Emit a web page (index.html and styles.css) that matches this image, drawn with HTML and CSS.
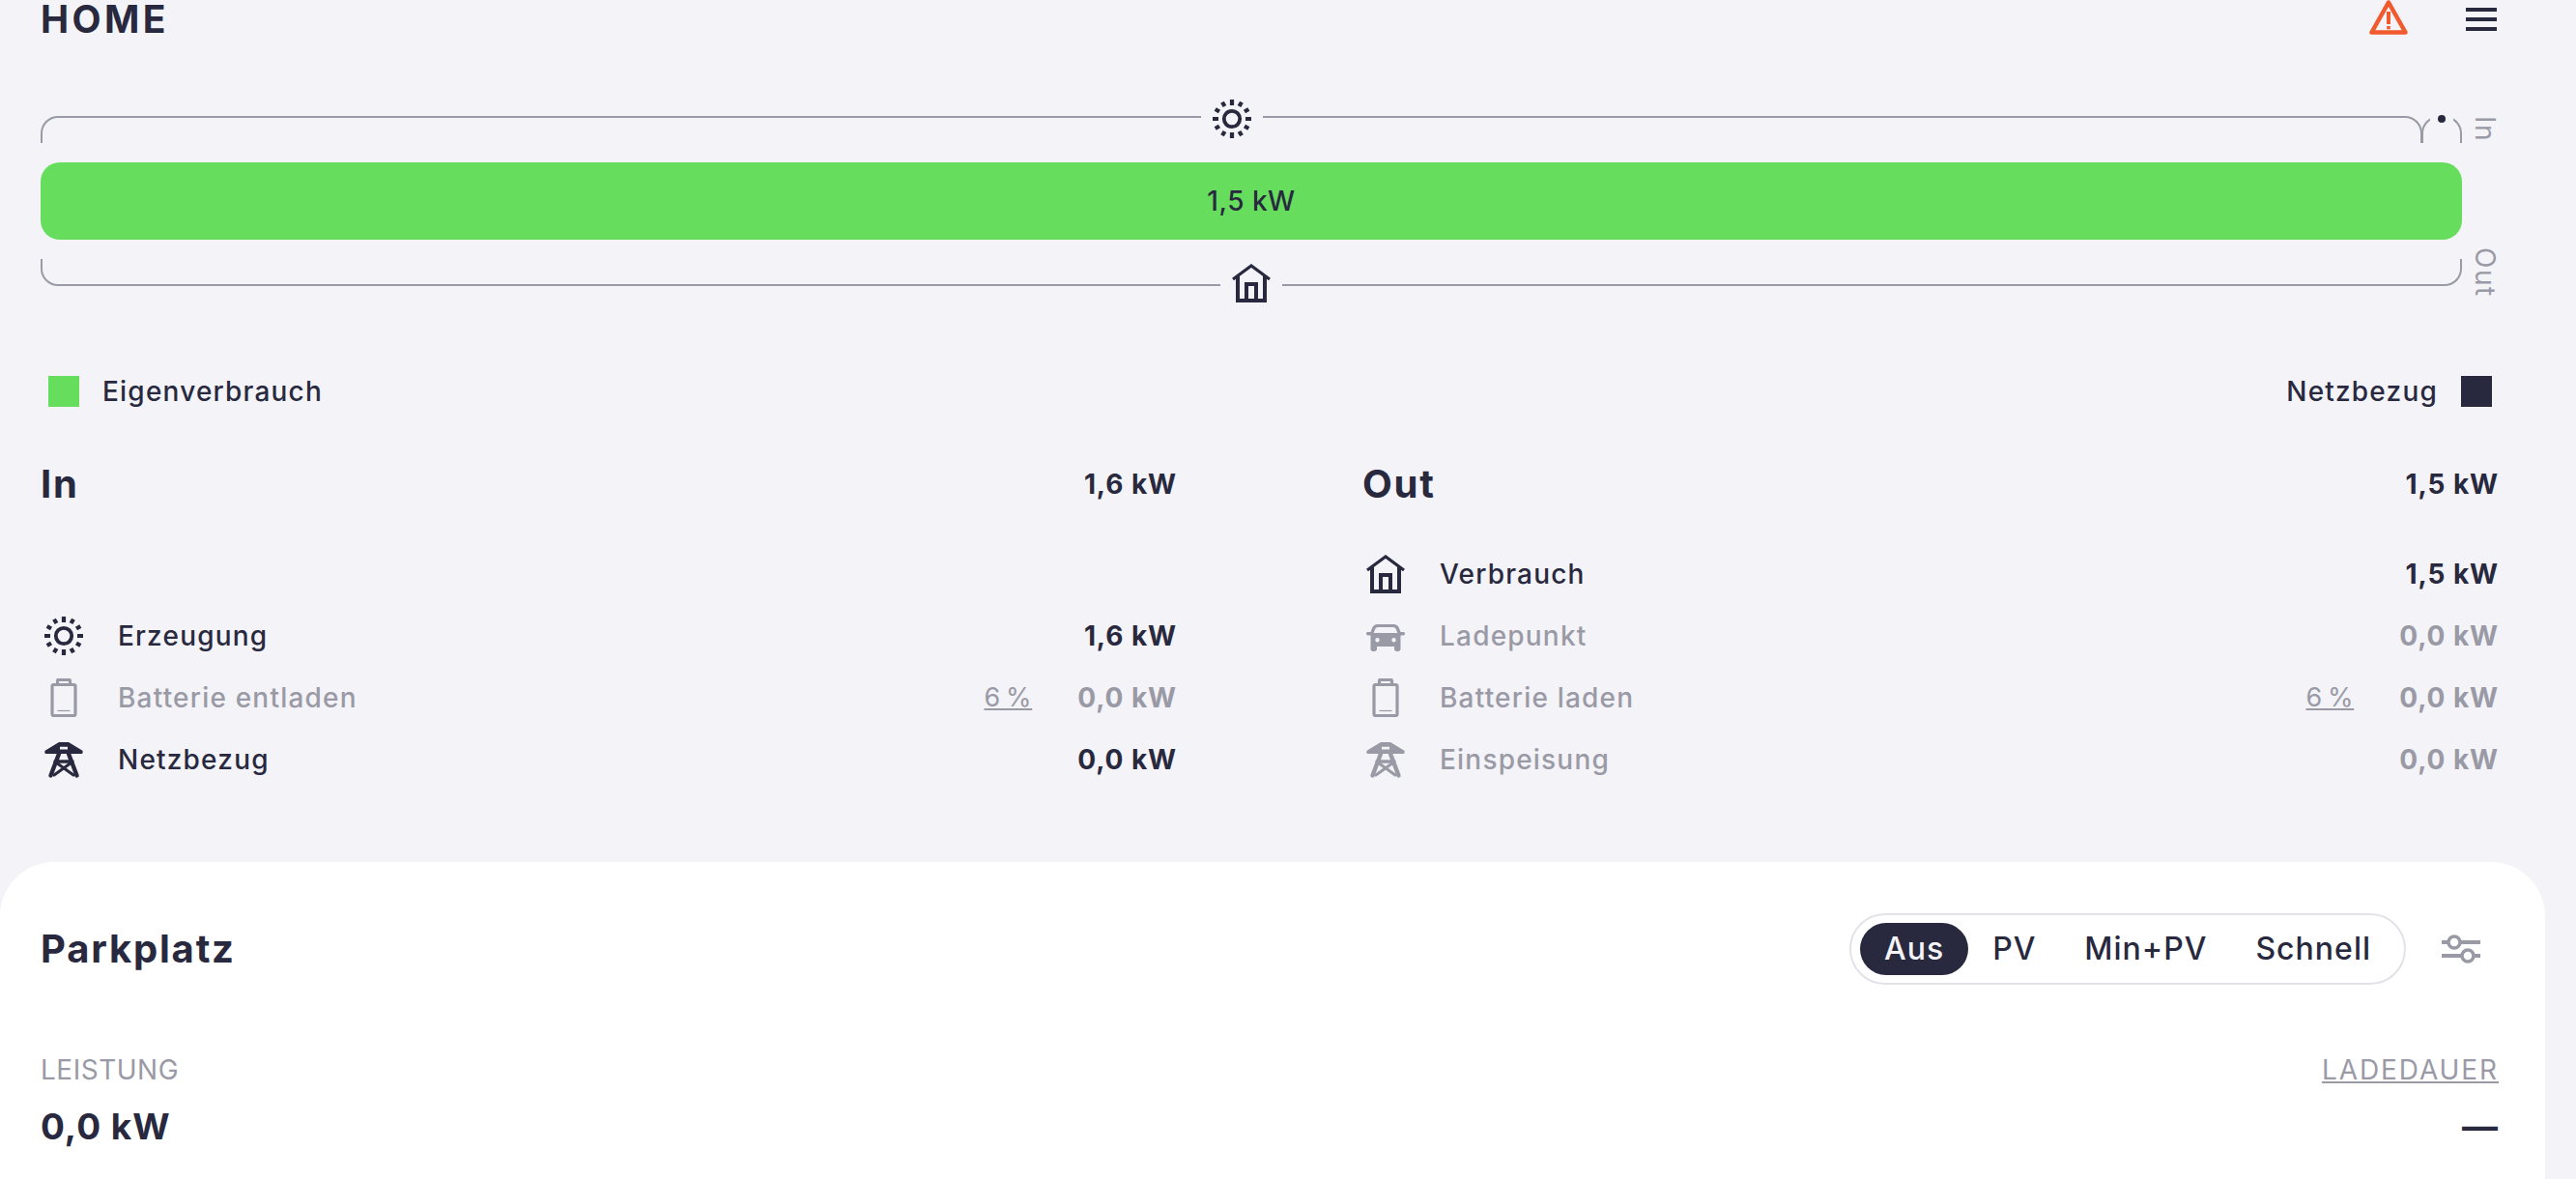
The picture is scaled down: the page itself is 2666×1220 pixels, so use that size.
FILE: index.html
```html
<!DOCTYPE html>
<html lang="de">
<head>
  <meta charset="UTF-8" />
  <title>HOME</title>
  <link rel="stylesheet" href="styles.css">
</head>
<body>
  <svg class="sprite" width="0" height="0">
    <symbol id="i-sun" viewBox="0 0 40 40">
      <circle cx="20" cy="20" r="8.200" fill="none" stroke="currentColor" stroke-width="3.800" />
      <g stroke="currentColor" stroke-width="4.200" fill="none">
        <path d="M20 0v6M20 34v6M0 20h6M34 20h6" />
        <path d="M10 2.700l2.500 4.300M27.500 33l2.500 4.300M2.700 10l4.300 2.500M33 27.500l4.300 2.500M30 2.700L27.500 7M12.500 33L10 37.300M37.300 10L33 12.500M7 27.500L2.700 30" />
      </g>
    </symbol>
    <symbol id="i-home" viewBox="0 0 40 40">
      <g fill="none" stroke="currentColor">
        <path d="M1 16L20 2l19 14" stroke-width="3.200" />
        <path d="M6 13v25h28V13" stroke-width="4" />
        <path d="M15 38V21h10v17" stroke-width="4" />
      </g>
    </symbol>
    <symbol id="i-battery" viewBox="0 0 40 40">
      <g fill="none" stroke="currentColor" stroke-linejoin="round">
        <rect x="8" y="6.500" width="24" height="32" rx="1.500" stroke-width="3.200" />
        <path d="M13.500 6V2.500a1 1 0 0 1 1-1h11a1 1 0 0 1 1 1V6" stroke-width="3.200" />
        <path d="M13.500 33.500h13" stroke-width="1.200" />
      </g>
    </symbol>
    <symbol id="i-tower" viewBox="0 0 40 40">
      <path fill="currentColor" fill-rule="evenodd" d="M15 2h10l14 8.500c1 .6 1 3.500-.5 3.500h-37C0 14 0 11.100 1 10.500zM16 6.700v2.800h8V6.700z" />
      <g fill="none" stroke="currentColor" stroke-linecap="round">
        <path d="M15 14L6.500 36.500M25 14l8.500 22.500" stroke-width="4.400" />
        <path d="M11 22h18" stroke-width="3.400" />
        <path d="M12 23l18 13M28 23L10 36" stroke-width="3" />
      </g>
    </symbol>
    <symbol id="i-car" viewBox="0 0 40 40">
      <path fill="currentColor" fill-rule="evenodd" d="M12 8h16c3 0 5 1.500 6 4l1.500 4H38.500c1 0 1.500.6 1.500 1.500s-.5 2-1.500 2H35.500V33.500c0 1.500-1 2.500-2.500 2.500h-1.500c-1.500 0-2.500-1-2.500-2.500V31H11v2.500c0 1.500-1 2.500-2.500 2.500H7c-1.500 0-2.500-1-2.500-2.500V19.500H1.500c-1 0-1.500-1.100-1.500-2S.5 16 1.500 16h3L6 12c1-2.500 3-4 6-4zm.5 3c-1.800 0-2.800.7-3.400 2.200L7.800 17h24.400l-1.300-3.800C30.300 11.700 29.300 11 27.500 11zM11.500 22a2.200 2.200 0 1 0 0 4.400 2.200 2.200 0 0 0 0-4.400zm17 0a2.200 2.200 0 1 0 0 4.400 2.200 2.200 0 0 0 0-4.400z" />
    </symbol>
  </svg>

  <div class="page">
    <header class="top">
      <h1>HOME</h1>
      <div class="top-icons">
        <svg class="warn" viewBox="0 0 40 36">
          <path d="M20 2.500L2.500 33.500h35z" fill="none" stroke="currentColor" stroke-width="4.500" stroke-linejoin="round" />
          <path d="M18 12h4v13h-4zM18.200 27h3.600v3.200h-3.600z" fill="currentColor" />
        </svg>
        <div class="burger"><span></span><span></span><span></span></div>
      </div>
    </header>

    <section class="flow">
      <div class="brackets brackets-in">
        <div class="seg"><span class="seg-icon"><svg class="icon"><use href="#i-sun" /></svg></span></div>
        <div class="seg seg-small"><span class="seg-icon"><i class="dot"></i></span></div>
      </div>
      <div class="side-label">In</div>

      <div class="bar">1,5 kW</div>
      <div></div>

      <div class="brackets brackets-out">
        <div class="seg"><span class="seg-icon"><svg class="icon"><use href="#i-home" /></svg></span></div>
      </div>
      <div class="side-label side-label-out">Out</div>
    </section>

    <div class="legend">
      <div class="legend-item"><i class="swatch swatch-green"></i>Eigenverbrauch</div>
      <div class="legend-item">Netzbezug<i class="swatch swatch-dark"></i></div>
    </div>

    <section class="totals">
      <div class="col">
        <div class="col-head"><h2>In</h2><b>1,6 kW</b></div>
        <div class="row row-empty"></div>
        <div class="row">
          <svg class="icon"><use href="#i-sun" /></svg>
          <span class="row-name">Erzeugung</span>
          <b>1,6 kW</b>
        </div>
        <div class="row is-off">
          <svg class="icon"><use href="#i-battery" /></svg>
          <span class="row-name">Batterie entladen</span>
          <u class="pct">6 %</u>
          <b>0,0 kW</b>
        </div>
        <div class="row">
          <svg class="icon"><use href="#i-tower" /></svg>
          <span class="row-name">Netzbezug</span>
          <b>0,0 kW</b>
        </div>
      </div>

      <div class="col">
        <div class="col-head"><h2>Out</h2><b>1,5 kW</b></div>
        <div class="row">
          <svg class="icon"><use href="#i-home" /></svg>
          <span class="row-name">Verbrauch</span>
          <b>1,5 kW</b>
        </div>
        <div class="row is-off">
          <svg class="icon"><use href="#i-car" /></svg>
          <span class="row-name">Ladepunkt</span>
          <b>0,0 kW</b>
        </div>
        <div class="row is-off">
          <svg class="icon"><use href="#i-battery" /></svg>
          <span class="row-name">Batterie laden</span>
          <u class="pct">6 %</u>
          <b>0,0 kW</b>
        </div>
        <div class="row is-off">
          <svg class="icon"><use href="#i-tower" /></svg>
          <span class="row-name">Einspeisung</span>
          <b>0,0 kW</b>
        </div>
      </div>
    </section>

    <section class="card">
      <div class="card-head">
        <h2>Parkplatz</h2>
        <div class="card-controls">
          <div class="modes">
            <button class="mode is-active">Aus</button>
            <button class="mode">PV</button>
            <button class="mode">Min+PV</button>
            <button class="mode">Schnell</button>
          </div>
          <svg class="sliders" viewBox="0 0 40 32">
            <g fill="none" stroke="currentColor" stroke-width="4">
              <path d="M0 9h7M19 9h21M0 23h21M33 23h7" />
              <circle cx="13" cy="9" r="6" stroke-width="3.500" />
              <circle cx="27" cy="23" r="6" stroke-width="3.500" />
            </g>
          </svg>
        </div>
      </div>
      <div class="card-stats">
        <div>
          <div class="stat-label">LEISTUNG</div>
          <div class="stat-value">0,0 kW</div>
        </div>
        <div class="stat-right">
          <u class="stat-label stat-label-link">LADEDAUER</u>
          <div class="stat-value">—</div>
        </div>
      </div>
    </section>
  </div>
</body>
</html>
```

FILE: styles.css
```css
body {
  margin: 0;
  background: #f3f3f8;
  color: #28293e;
  font-family: Inter, "Noto Sans", sans-serif;
  font-size: 28px;
  font-weight: 500;
  letter-spacing: 1.2px;
  height: 1220px;
  overflow: hidden;
}
.sprite {
  position: absolute;
}
.page {
  padding-left: 42px;
}
h1, h2 {
  margin: 0;
  font-weight: 700;
}
.icon {
  display: block;
  width: 40px;
  height: 40px;
  flex: none;
}

/* header */
.top {
  display: flex;
  justify-content: space-between;
  align-items: flex-start;
  height: 40px;
  padding-right: 82px;
}
.top h1 {
  font-size: 39px;
  line-height: 40px;
  letter-spacing: 3.4px;
}
.top-icons {
  display: flex;
  align-items: flex-start;
  gap: 60px;
}
.warn {
  width: 40px;
  height: 36px;
  color: #f15a2c;
}
.burger {
  display: flex;
  flex-direction: column;
  gap: 6px;
  width: 32px;
  padding-top: 8px;
}
.burger span {
  height: 4px;
  background: #28293e;
}

/* power flow */
.flow {
  display: grid;
  grid-template-columns: 2506px 1fr;
  column-gap: 9px;
  row-gap: 20px;
  margin-top: 80px;
}
.brackets {
  display: flex;
  height: 28px;
}
.seg {
  flex: 1;
  box-sizing: border-box;
  display: flex;
  justify-content: center;
  border: 2px solid #9a9aa6;
  border-bottom: none;
  border-radius: 18px 18px 0 0;
}
.seg-small {
  flex: none;
  width: 42px;
  margin-left: -1px;
}
.seg-icon {
  height: 40px;
  padding: 0 12px;
  margin-top: -19px;
  background: #f3f3f8;
}
.seg-small .seg-icon {
  height: 8px;
  padding: 0 8px;
  margin-top: -3px;
}
.dot {
  display: block;
  width: 8px;
  height: 8px;
  border-radius: 50%;
  background: #28293e;
}
.brackets-out .seg {
  border: 2px solid #9a9aa6;
  border-top: none;
  border-radius: 0 0 18px 18px;
  align-items: flex-end;
}
.brackets-out .seg-icon {
  margin: 0 0 -19px;
}
.side-label {
  justify-self: start;
  writing-mode: vertical-rl;
  font-size: 28px;
  font-weight: 400;
  line-height: 30px;
  letter-spacing: 1.5px;
  color: #9a9aa6;
}
.side-label-out {
  margin-top: -12px;
}
.bar {
  height: 80px;
  line-height: 80px;
  border-radius: 20px;
  background: #66dd5c;
  text-align: center;
  letter-spacing: 0.5px;
}

/* legend */
.legend {
  display: flex;
  justify-content: space-between;
  margin-top: 80px;
  padding: 0 87px 0 8px;
}
.legend-item {
  display: flex;
  align-items: center;
  gap: 24px;
}
.swatch {
  width: 32px;
  height: 32px;
}
.swatch-green {
  background: #66dd5c;
}
.swatch-dark {
  background: #28293e;
}

/* in / out */
.totals {
  display: grid;
  grid-template-columns: 1fr 1fr;
  column-gap: 192px;
  padding-right: 80px;
  margin-top: 55px;
}
.col-head {
  display: flex;
  justify-content: space-between;
  align-items: center;
  height: 48px;
  margin-bottom: 37px;
}
.col-head h2 {
  font-size: 40px;
  letter-spacing: 1.8px;
}
.row {
  display: flex;
  align-items: center;
  height: 64px;
  padding-left: 4px;
}
.row .icon {
  margin-right: 36px;
}
.row-name {
  flex: 1;
}
.row b, .col-head b {
  font-weight: 700;
  letter-spacing: 0.9px;
}
.pct {
  font-size: 27px;
  font-weight: 400;
  letter-spacing: 0.6px;
  word-spacing: -3px;
  margin-right: 47px;
}
.is-off {
  color: #9a9aa6;
}

/* charge point card */
.card {
  box-sizing: border-box;
  height: 330px;
  margin: 74px 32px 0 -42px;
  padding: 52px 48px 0 42px;
  background: #fff;
  border-radius: 56px 56px 0 0;
}
.card-head {
  display: flex;
  justify-content: space-between;
  align-items: center;
  height: 76px;
}
.card-head h2 {
  font-size: 40px;
  letter-spacing: 1.8px;
}
.card-controls {
  display: flex;
  align-items: center;
  gap: 37px;
  padding-right: 19px;
}
.modes {
  display: flex;
  align-items: center;
  box-sizing: border-box;
  height: 74px;
  padding: 0 9px;
  border: 2px solid #e2e3e8;
  border-radius: 37px;
}
.mode {
  height: 54px;
  padding: 0 25px;
  border: none;
  border-radius: 27px;
  background: none;
  color: #28293e;
  font: inherit;
  font-size: 32px;
  letter-spacing: 1px;
}
.mode.is-active {
  background: #28293e;
  color: #f3f3f8;
}
.sliders {
  width: 40px;
  height: 32px;
  color: #9a9aa6;
}
.card-stats {
  display: flex;
  justify-content: space-between;
  margin-top: 70px;
}
.stat-label {
  font-size: 28px;
  font-weight: 400;
  line-height: 34px;
  letter-spacing: 0.5px;
  color: #9a9aa6;
}
.stat-label-link {
  letter-spacing: 1.9px;
}
.stat-value {
  margin-top: 20px;
  font-size: 37px;
  font-weight: 700;
  line-height: 44px;
  letter-spacing: 1px;
}
.stat-right {
  text-align: right;
}
```
